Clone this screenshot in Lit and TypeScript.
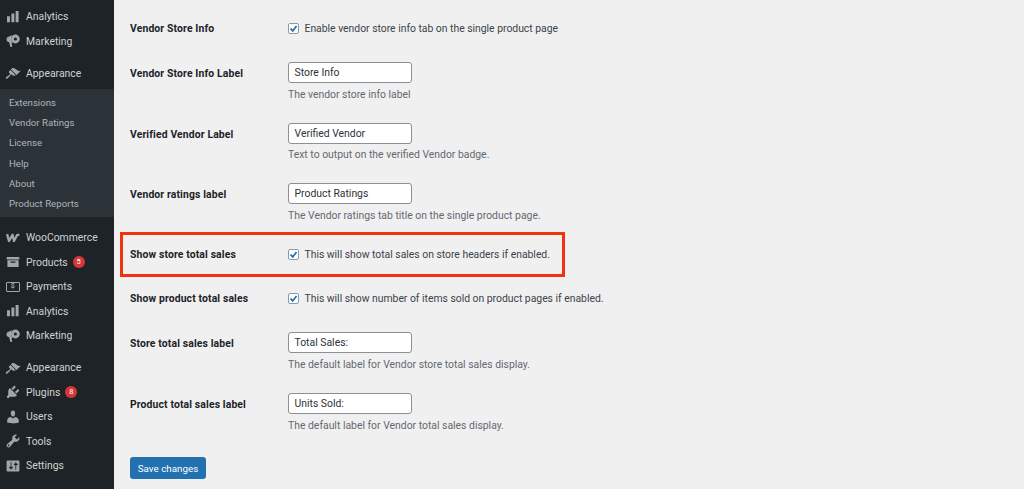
import { LitElement, html, css, svg } from "lit";
import { customElement } from "lit/decorators.js";

const icons: Record<string, unknown> = {
  chart: svg`<path d="M2.5 9h3.7v7.6H2.5zM8 5.5h3.7v11.1H8zM13.3 2.5H17v14.1h-3.7z"/>`,
  mega: svg`<path fill-rule="evenodd" d="M18.5 7.5a5.5 5.5 0 1 1-11 0 5.5 5.5 0 0 1 11 0zm-3.5 0a2 2 0 1 0-4 0 2 2 0 0 0 4 0z"/><path d="M9.4 2.4 3 5.2C1.6 5.9 1.6 10 3 10.7l2.2.9 1.3 5.4c.1.5.6.7 1 .6l1-.3c.5-.1.7-.5.6-1l-1-3.4 1.8-.5C7.4 10.800 6.900 5 9.400 2.400z"/>`,
  brush: svg`<path d="M14.48 11.06L7.41 3.99l1.5-1.5c.5-.56 2.3-.47 3.51.32 1.21.8 1.43 1.28 2.91 2.1 1.18.64 2.45 1.26 4.45.85zm-.71.71L6.7 4.7 4.93 6.47c-.39.39-.39 1.02 0 1.41l1.06 1.06c.39.39.39 1.03 0 1.42-.6.6-1.43 1.11-2.21 1.69-.35.26-.7.53-1.01.84C1.43 13.23.4 14.64 1.17 15.41c.78.78 2.18-.26 3.52-1.6.31-.31.58-.66.84-1.01.58-.78 1.09-1.61 1.69-2.21.39-.39 1.02-.39 1.41 0l1.06 1.06c.39.39 1.02.39 1.41 0z" transform="translate(0 1.5)"/>`,
  woo: svg`<path fill="none" stroke="#a2a6a9" stroke-width="2.9" stroke-linejoin="round" d="M2.6 5.2 5 13.8 9.4 6l1.8 7.8L15.4 6h2.6"/>`,
  box: svg`<path fill-rule="evenodd" d="M2.1 3.75h15.8v3.1H2.1zM3 7.8h14v8.45H3zM7 9.4v1.4h6V9.4z"/>`,
  plug: svg`<path d="M13.11 4.36L9.87 7.6 8 5.73l3.24-3.24c.35-.34 1.05-.2 1.56.32.52.51.66 1.21.31 1.55zm-8 1.77l.91-1.12 9.01 9.01-1.19.84c-.71.71-2.63 1.16-3.82 1.16H6.14L4.9 17.26c-.59.59-1.54.59-2.12 0-.59-.58-.59-1.53 0-2.12l1.24-1.24v-3.88c0-1.13.4-3.19 1.09-3.89zm7.26 3.97l3.24-3.24c.34-.35 1.04-.21 1.55.31.52.51.66 1.21.31 1.55l-3.24 3.25z"/>`,
  user: svg`<path d="M10 9.25c-2.27 0-2.73-3.44-2.73-3.44C7 4.02 7.82 2 9.97 2c2.16 0 2.98 2.02 2.71 3.81 0 0-.41 3.44-2.68 3.44zm0 2.57L12.72 10c2.39 0 4.52 2.33 4.52 4.53v2.49s-3.65 1.13-7.24 1.13c-3.65 0-7.24-1.13-7.24-1.13v-2.49c0-2.25 1.94-4.48 4.47-4.48z"/>`,
  tool: svg`<path d="M16.68 9.77c-1.34 1.34-3.3 1.67-4.95.99l-5.41 6.52c-.99.99-2.59.99-3.58 0s-.99-2.59 0-3.57l6.52-5.42c-.68-1.65-.35-3.61.99-4.95 1.28-1.28 3.12-1.62 4.72-1.06l-2.89 2.89 2.82 2.82 2.86-2.87c.53 1.58.18 3.39-1.08 4.65zM3.81 16.21c.4.39 1.04.39 1.43 0 .4-.4.4-1.04 0-1.43-.39-.4-1.03-.4-1.43 0-.39.39-.39 1.03 0 1.43z"/>`,
  gear: svg`<path d="M18 16V4c0-.55-.45-1-1-1H3c-.55 0-1 .45-1 1v12c0 .55.45 1 1 1h14c.55 0 1-.45 1-1zM8 11h1c.55 0 1 .45 1 1s-.45 1-1 1H8v1.5c0 .28-.22.5-.5.5s-.5-.22-.5-.5V13H6c-.55 0-1-.45-1-1s.45-1 1-1h1V5.500c0-.28.22-.5.5-.5s.5.22.5.5V11zm5-2h-1c-.55 0-1-.45-1-1s.45-1 1-1h1V5.5c0-.28.22-.5.5-.5s.5.22.5.5V7h1c.55 0 1 .45 1 1s-.45 1-1 1h-1v5.5c0 .28-.22.5-.5.5s-.5-.22-.5-.5V9z" fill-rule="evenodd"/>`,
};

type Row =
  | { label: string; check: string }
  | { label: string; value: string; desc: string };

const rows: Row[] = [
  { label: "Vendor Store Info", check: "Enable vendor store info tab on the single product page" },
  { label: "Vendor Store Info Label", value: "Store Info", desc: "The vendor store info label" },
  { label: "Verified Vendor Label", value: "Verified Vendor", desc: "Text to output on the verified Vendor badge." },
  { label: "Vendor ratings label", value: "Product Ratings", desc: "The Vendor ratings tab title on the single product page." },
  { label: "Show store total sales", check: "This will show total sales on store headers if enabled." },
  { label: "Show product total sales", check: "This will show number of items sold on product pages if enabled." },
  { label: "Store total sales label", value: "Total Sales:", desc: "The default label for Vendor store total sales display." },
  { label: "Product total sales label", value: "Units Sold:", desc: "The default label for Vendor total sales display." },
];

@customElement("app-root")
export class AppRoot extends LitElement {
  static styles = css`
    :host {
      display: block;
      width: 1024px;
      height: 489px;
      overflow: hidden;
      position: relative;
      background: #f0f0f1;
      font-family: Roboto, "Liberation Sans", sans-serif;
      font-size: 10.4px;
      color: #3c434a;
    }
    .page { display: flex; height: 489px; }
    .side {
      width: 114px;
      flex: none;
      background: #1d2327;
      color: #d0d2d4;
      padding-top: 4.5px;
      box-sizing: border-box;
    }
    .item {
      height: 24.5px;
      display: flex;
      align-items: center;
      padding-left: 5px;
    }
    .item svg { width: 16px; height: 16px; fill: #a2a6a9; flex: none; }
    .item .t { margin-left: 5px; }
    .pay {
      width: 14.5px; height: 10.5px; margin: 0 1px 0 .5px; flex: none;
      border: 1.5px solid #a2a6a9; box-sizing: border-box; border-radius: 1px;
      color: #a2a6a9; font-size: 7px; font-weight: 700; line-height: 7.5px; text-align: center;
    }
    .badge {
      width: 12px; height: 12px; margin-left: 5px; border-radius: 50%;
      background: #d63638; color: #fff; font-size: 7.5px; line-height: 12px; text-align: center;
    }
    .sep { height: 7.5px; }
    .sub {
      background: #2c3338;
      margin: 3.5px 0 8.5px;
      padding: 4px 0 3px;
      color: #b0b5ba;
    }
    .sub div { height: 20.2px; line-height: 20px; padding-left: 9px; font-size: 9.6px; letter-spacing: .03px; }
    .main { flex: 1; padding: 5.8px 0 0 16px; }
    .row { display: grid; grid-template-columns: 158px 1fr; padding: 12px 0; align-items: start; }
    .row.c { height: 20px; align-items: center; }
    .row.i { height: 36.85px; }
    .lab { font-weight: 700; color: #1d2327; line-height: 23px; letter-spacing: .13px; }
    .c .lab { line-height: 21px; }
    .chk { display: flex; align-items: center; gap: 5.5px; letter-spacing: -.015px; }
    .box {
      width: 11px; height: 11px; box-sizing: border-box; border: 1px solid #8c9aa6; border-radius: 2px; background: #fff;
      display: flex; align-items: center; justify-content: center; flex: none;
    }
    .box svg { width: 9px; height: 9px; fill: none; stroke: #2271b1; stroke-width: 2.3; }
    .input {
      width: 124px; height: 21px; box-sizing: border-box;
      border: 1px solid #8c8f94; border-radius: 3px; background: #fff;
      padding-left: 5.5px; line-height: 19px; color: #2c3338;
    }
    .desc { color: #646970; margin-top: 3.8px; line-height: 15px; }
    .btn {
      width: 76px; height: 22px; margin-top: 15.3px; border-radius: 3px;
      background: #2271b1; color: #fff; font-size: 9.8px; display: flex; align-items: center; justify-content: center;
    }
    .hl {
      position: absolute; left: 120px; top: 232px; width: 445px; height: 45px;
      box-sizing: border-box; border: 3px solid #f1330f; pointer-events: none;
    }
  `;

  private icon(n: string) {
    return html`<svg viewBox="0 0 20 20">${icons[n]}</svg>`;
  }

  private item(i: string, t: string, badge?: string) {
    return html`<div class="item">${i === "pay" ? html`<span class="pay">$</span>` : this.icon(i)}<span class="t">${t}</span>${badge ? html`<span class="badge">${badge}</span>` : ""}</div>`;
  }

  render() {
    return html`<div class="page">
      <nav class="side">
        ${this.item("chart", "Analytics")}
        ${this.item("mega", "Marketing")}
        <div class="sep"></div>
        ${this.item("brush", "Appearance")}
        <div class="sub">
          ${["Extensions", "Vendor Ratings", "License", "Help", "About", "Product Reports"].map((s) => html`<div>${s}</div>`)}
        </div>
        ${this.item("woo", "WooCommerce")}
        ${this.item("box", "Products", "5")}
        ${this.item("pay", "Payments")}
        ${this.item("chart", "Analytics")}
        ${this.item("mega", "Marketing")}
        <div class="sep"></div>
        ${this.item("brush", "Appearance")}
        ${this.item("plug", "Plugins", "8")}
        ${this.item("user", "Users")}
        ${this.item("tool", "Tools")}
        ${this.item("gear", "Settings")}
      </nav>
      <main class="main">
        ${rows.map((r) =>
          "check" in r
            ? html`<div class="row c"><div class="lab">${r.label}</div><div class="chk"><span class="box"><svg viewBox="0 0 12 12"><path d="M2 6.2 5 9.2 10 2.6"/></svg></span>${r.check}</div></div>`
            : html`<div class="row i"><div class="lab">${r.label}</div><div><div class="input">${r.value}</div><div class="desc">${r.desc}</div></div></div>`
        )}
        <div class="btn">Save changes</div>
      </main>
    </div>
    <div class="hl"></div>`;
  }
}
